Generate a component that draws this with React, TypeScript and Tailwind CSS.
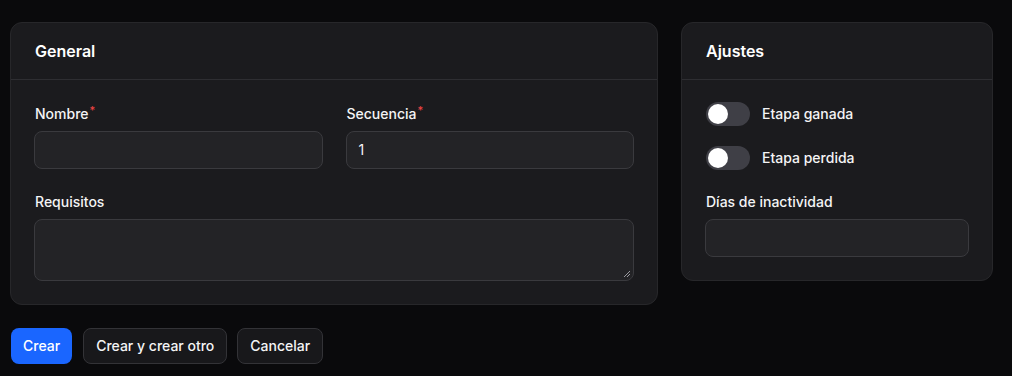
import React from "react";

function Label({ children, required }: { children: React.ReactNode; required?: boolean }) {
  return (
    <div className="flex items-start text-sm font-medium leading-5 text-[#f4f4f5]">
      <span>{children}</span>
      {required && <span className="ml-[1px] text-[11px] leading-3 text-[#ef4444]">*</span>}
    </div>
  );
}

function Toggle({ label }: { label: string }) {
  return (
    <div className="flex items-center gap-3">
      <div className="flex h-6 w-11 items-center rounded-full bg-[#3f3f46] px-[2px]">
        <div className="h-5 w-5 rounded-full bg-white" />
      </div>
      <span className="text-sm font-medium text-[#f4f4f5]">{label}</span>
    </div>
  );
}

export default function App() {
  return (
    <div
      className="min-h-[376px] bg-[#0a0a0c] pl-[10px] pr-[19px] pt-[22px]"
      style={{ fontFamily: "Inter, 'Noto Sans', sans-serif" }}
    >
      <div className="grid grid-cols-[1fr_312px] items-start gap-[23px]">
        <div className="rounded-xl border border-[#27272a] bg-[#1b1b1e]">
          <div className="border-b border-[#2e2e32] py-4 pl-6 pr-[23px]">
            <h2 className="text-base font-semibold leading-6 text-white">General</h2>
          </div>
          <div className="flex flex-col gap-[23px] px-[23px] pb-[23px] pt-6">
            <div className="grid grid-cols-2 gap-[23px]">
              <div className="flex flex-col gap-[7px]">
                <div className="pl-[1px]">
                  <Label required>Nombre</Label>
                </div>
                <div className="h-[38px] rounded-lg border border-[#3a3a3e] bg-[#232326]" />
              </div>
              <div className="flex flex-col gap-[7px]">
                <div className="pl-[1px]">
                  <Label required>Secuencia</Label>
                </div>
                <div className="flex h-[38px] items-center rounded-lg border border-[#3a3a3e] bg-[#232326] px-3 text-sm text-[#f4f4f5]">
                  1
                </div>
              </div>
            </div>
            <div className="flex flex-col gap-[7px]">
              <div className="pl-[1px]">
                <Label>Requisitos</Label>
              </div>
              <div className="relative h-[62px] rounded-lg border border-[#3a3a3e] bg-[#232326]">
                <svg className="absolute bottom-[2px] right-[2px]" width="8" height="8" viewBox="0 0 8 8">
                  <path d="M7 1L1 7M7 4L4 7" stroke="#9a9aa0" strokeWidth="1" />
                </svg>
              </div>
            </div>
          </div>
        </div>

        <div className="rounded-xl border border-[#27272a] bg-[#1b1b1e]">
          <div className="border-b border-[#2e2e32] py-4 pl-6 pr-[23px]">
            <h2 className="text-base font-semibold leading-6 text-white">Ajustes</h2>
          </div>
          <div className="flex flex-col px-[23px] pb-[23px] pt-[22px]">
            <div className="pl-[1px]">
              <Toggle label="Etapa ganada" />
            </div>
            <div className="mt-5 pl-[1px]">
              <Toggle label="Etapa perdida" />
            </div>
            <div className="mt-[22px] flex flex-col gap-[7px]">
              <div className="pl-[1px]">
                <Label>Días de inactividad</Label>
              </div>
              <div className="h-[38px] rounded-lg border border-[#3a3a3e] bg-[#232326]" />
            </div>
          </div>
        </div>
      </div>

      <div className="mt-[23px] flex gap-[10px] pl-[1px]">
        <button className="mr-[1px] h-9 rounded-lg bg-[#1a66ff] px-3 text-sm font-medium text-white">Crear</button>
        <button className="h-9 rounded-lg border border-[#333337] bg-[#18181b] px-3 text-sm font-medium text-[#f4f4f5]">
          Crear y crear otro
        </button>
        <button className="h-9 rounded-lg border border-[#333337] bg-[#18181b] px-3 text-sm font-medium text-[#f4f4f5]">
          Cancelar
        </button>
      </div>
    </div>
  );
}
